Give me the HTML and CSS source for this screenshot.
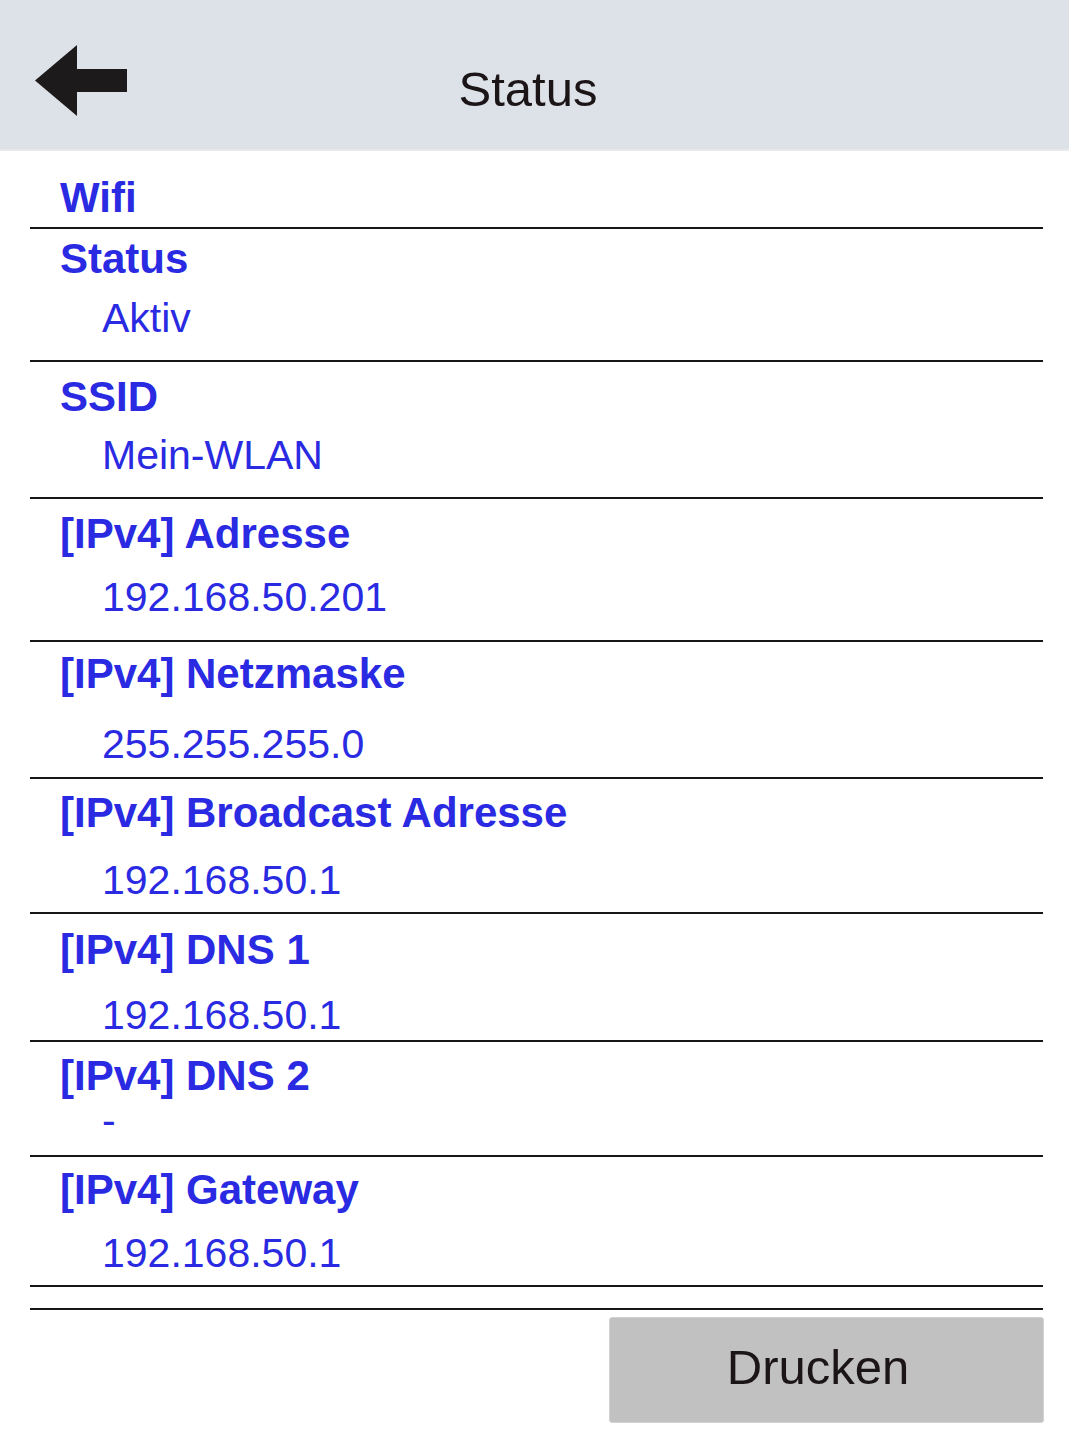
FILE: index.html
```html
<!DOCTYPE html>
<html lang="de">
<head>
<meta charset="utf-8">
<title>Status</title>
<link rel="stylesheet" href="styles.css">
</head>
<body>
<header class="topbar">
  <svg class="back" width="92" height="71" viewBox="0 0 92 71" aria-label="Zurück">
    <path d="M0 35.5 L42 0 L42 24 L92 24 L92 47 L42 47 L42 71 Z" fill="#1c1a1a"/>
  </svg>
  <h1 class="title">Status</h1>
</header>
<main class="list">
  <div class="section-title">Wifi</div>
  <div class="item r-status"><div class="label">Status</div><div class="value">Aktiv</div></div>
  <div class="item r-ssid"><div class="label">SSID</div><div class="value">Mein-WLAN</div></div>
  <div class="item r-addr"><div class="label">[IPv4] Adresse</div><div class="value">192.168.50.201</div></div>
  <div class="item r-mask"><div class="label">[IPv4] Netzmaske</div><div class="value">255.255.255.0</div></div>
  <div class="item r-bcast"><div class="label">[IPv4] Broadcast Adresse</div><div class="value">192.168.50.1</div></div>
  <div class="item r-dns1"><div class="label">[IPv4] DNS 1</div><div class="value">192.168.50.1</div></div>
  <div class="item r-dns2"><div class="label">[IPv4] DNS 2</div><div class="value">-</div></div>
  <div class="item r-gw"><div class="label">[IPv4] Gateway</div><div class="value">192.168.50.1</div></div>
  <div class="spacer"></div>
  <div class="actions"><button class="print" type="button">Drucken</button></div>
</main>
</body>
</html>
```
FILE: styles.css
```css
html, body {
  margin: 0;
  padding: 0;
  background: #ffffff;
}
body {
  font-family: "Liberation Sans", Arial, Helvetica, sans-serif;
  width: 1069px;
}
.topbar {
  box-sizing: border-box;
  height: 151px;
  background: #dde1e8;
  border-bottom: 2px solid #e6e8ec;
  display: flex;
  align-items: flex-start;
  padding: 45px 0 0 35px;
}
.back {
  display: block;
  flex: none;
}
.title {
  flex: 1;
  margin: 20px 140px 0 0;
  font-size: 49px;
  line-height: 49px;
  font-weight: normal;
  color: #1b1517;
  text-align: center;
}
.list {
  margin: 0 26px 0 30px;
}
.section-title,
.label {
  font-size: 42px;
  line-height: 48px;
  font-weight: bold;
  color: #2a2ae2;
  padding-left: 30px;
}
.section-title {
  padding-top: 23px;
  padding-bottom: 5px;
  border-bottom: 2px solid #161616;
}
.item {
  border-bottom: 2px solid #161616;
  padding-top: var(--pt);
  padding-bottom: var(--pb);
}
.value {
  font-size: 41px;
  line-height: 48px;
  color: #2a2ae2;
  padding-left: 72px;
  margin-top: var(--gap);
}
.r-status { --pt: 6px;  --gap: 11px; --pb: 18px; }
.r-ssid   { --pt: 11px; --gap: 10px; --pb: 18px; }
.r-addr   { --pt: 11px; --gap: 15px; --pb: 19px; }
.r-mask   { --pt: 8px;  --gap: 22px; --pb: 9px; }
.r-bcast  { --pt: 10px; --gap: 19px; --pb: 8px; }
.r-dns1   { --pt: 12px; --gap: 17px; --pb: 1px; }
.r-dns2   { --pt: 10px; --gap: -4px; --pb: 11px; }
.r-gw     { --pt: 9px;  --gap: 15px; --pb: 8px; }
.spacer {
  height: 21px;
  border-bottom: 2px solid #161616;
}
.actions {
  display: flex;
  justify-content: flex-end;
  margin-top: 7px;
  margin-right: -1px;
}
.print {
  box-sizing: border-box;
  width: 435px;
  height: 106px;
  background: #c1c1c1;
  border: 1px solid #d2d2d2;
  border-radius: 3px;
  font-family: "Liberation Sans", Arial, Helvetica, sans-serif;
  font-size: 49px;
  line-height: 49px;
  color: #1b1517;
  padding: 0 17px 6px 0;
  text-align: center;
  display: block;
}
```
